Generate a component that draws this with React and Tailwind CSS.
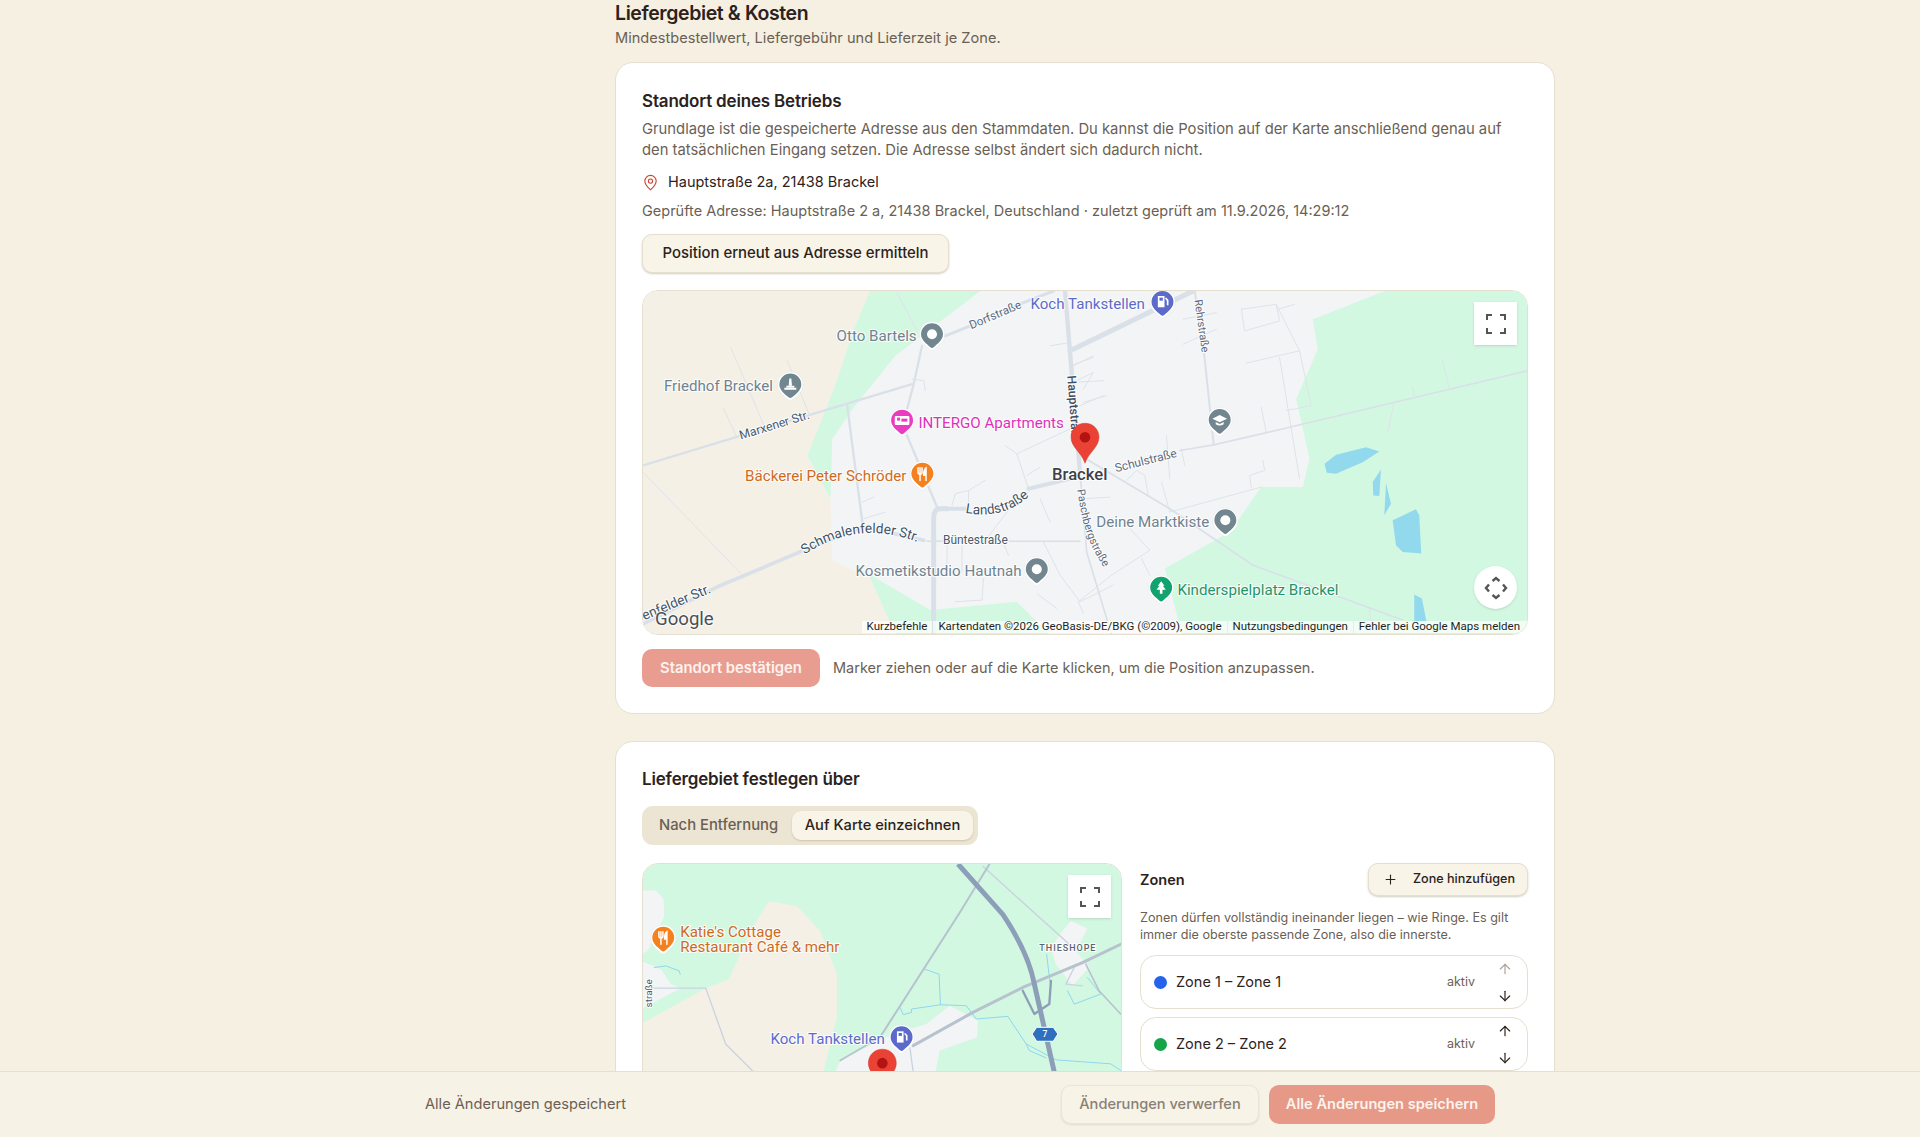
import { ArrowDown, ArrowUp, MapPin, Plus } from 'lucide-react'

const font = { fontFamily: 'Roboto, "Liberation Sans", sans-serif' }

// map drawings use the coordinates of a 3x crop, so one unit is a third of a pixel
function Road({ p, w = 3, c = '#dde3ea' }) {
  return <polyline points={p} fill="none" stroke={c} strokeWidth={w} strokeLinejoin="round" strokeLinecap="round" />
}

function Label({ x, y, size = 45.5, fill = '#6f8290', rotate, anchor, weight, spacing, children }) {
  return (
    <text
      x={x}
      y={y}
      fontSize={size}
      fill={fill}
      fontWeight={weight}
      textAnchor={anchor}
      letterSpacing={spacing}
      stroke="#fff"
      strokeWidth="6"
      strokeOpacity="0.85"
      paintOrder="stroke"
      transform={rotate ? `rotate(${rotate} ${x} ${y})` : undefined}
      style={font}
    >
      {children}
    </text>
  )
}

function Curved({ id, d, size = 36, fill = '#435468', children }) {
  return (
    <>
      <path id={id} d={d} fill="none" />
      <text fontSize={size} fill={fill} stroke="#fff" strokeWidth="6" strokeOpacity="0.85" paintOrder="stroke" style={font}>
        <textPath href={`#${id}`}>{children}</textPath>
      </text>
    </>
  )
}

function Poi({ x, y, color, children }) {
  return (
    <g transform={`translate(${x} ${y})`}>
      <path d="M-38 0A38 38 0 1 1 38 0C38 22 20 34 8 45C3 50-3 50-8 45C-20 34-38 22-38 0Z" fill="#fff" stroke="#d8dde2" strokeWidth="1" />
      <path d="M-33 0A33 33 0 1 1 33 0C33 18 16 29 5 39C2 42-2 42-5 39C-16 29-33 18-33 0Z" fill={color} />
      {children}
    </g>
  )
}

const Fork = () => (
  <g stroke="#fff" strokeWidth="4.5" fill="none" strokeLinecap="round">
    <path d="M-13-18V-4C-13 1-7 1-7 1C-7 1-1 1-1-4V-18M-7-18V20" />
    <path d="M11 20V-18C5-14 4-4 4 4H11" fill="#fff" />
  </g>
)
const Dot = () => <circle r="15" fill="#fff" />
const Pump = () => (
  <g fill="#fff">
    <path d="M-14-18H6V16H-14Z" />
    <path d="M10-14L18-6V10H13V-4L8-10Z" />
    <rect x="-9" y="-13" width="10" height="9" fill="#5c6bc9" />
  </g>
)
const Bed = () => (
  <g>
    <rect x="-22" y="-14" width="44" height="27" rx="3" fill="#fff" />
    <rect x="-15" y="-9" width="9" height="9" fill="#e93cc0" />
    <rect x="-2" y="-6" width="18" height="9" fill="#e93cc0" />
  </g>
)
const Monument = () => (
  <g fill="#fff">
    <path d="M-3-18H3L5 4H-5Z" />
    <path d="M-12 4H12V9H-12ZM-18 10H18V16H-18Z" />
  </g>
)
const Cap = () => (
  <g fill="#fff">
    <path d="M0-15L22-4L0 7L-22-4Z" />
    <path d="M-12 6L0 12L12 6V13C5 18-5 18-12 13Z" />
  </g>
)
const Tree = () => <path d="M0-20L10-6H5L14 6H4V18H-4V6H-14L-5-6H-10Z" fill="#fff" />

function Marker({ x, y, scale = 1 }) {
  return (
    <g transform={`translate(${x} ${y}) scale(${scale})`}>
      <path d="M0-42C-24-42-42-24-42 0C-42 30-10 46 0 78C10 46 42 30 42 0C42-24 24-42 0-42Z" fill="#ea4335" stroke="#d33426" strokeWidth="1.5" />
      <circle r="16" fill="#b31412" />
    </g>
  )
}

function FullscreenButton({ className }) {
  return (
    <div className={`absolute flex h-[43px] w-[43px] items-center justify-center bg-white shadow-sm ${className}`}>
      <svg width="20" height="20" viewBox="0 0 20 20" fill="none" stroke="#555" strokeWidth="2">
        <path d="M1 6V1H6M14 1H19V6M19 14V19H14M6 19H1V14" />
      </svg>
    </div>
  )
}

function MainMap() {
  return (
    <div className="relative h-[345px] overflow-hidden rounded-2xl border border-[#e6dfcf]">
      <svg className="block h-full w-full" viewBox="6 15 2658 1032" preserveAspectRatio="none">
        <rect x="0" y="0" width="2700" height="1100" fill="#f3f4f5" />
        <path d="M0 0H700L640 130L580 310L500 510L570 640L575 825L690 880L770 1060H0Z" fill="#f5f0e6" />
        <path d="M695 0H1040L765 210L700 290L640 365L575 460L570 640L500 510L580 310L640 130Z" fill="#d3f8e2" />
        <path d="M640 840L870 975L1130 950L1190 1010L1240 1060H770L690 880Z" fill="#d3f8e2" />
        <g transform="translate(1290 0)">
          <path d="M985 0L730 100L745 190L680 340L720 520L700 605L575 605L480 740L285 850L340 1060H1400V0Z" fill="#d3f8e2" />
          <path d="M765 535L800 508L890 485L930 498L880 530L800 565L772 562Z" fill="#93d9ee" />
          <path d="M935 552L930 632L912 630L910 590Z" fill="#93d9ee" />
          <path d="M950 592L965 655L945 690Z" fill="#93d9ee" />
          <path d="M970 705L1040 672L1050 690L1056 805L1000 800L980 780Z" fill="#93d9ee" />
          <path d="M1035 928L1058 940L1072 1010H1035Z" fill="#93d9ee" />
        </g>

        {/* small roads */}
        <Road p="270,185 370,420" />
        <Road p="440,225 505,385" />
        <Road p="248,368 288,455" />
        <Road p="6,560 300,865" />
        <Road p="770,20 830,135" />
        <Road p="815,280 850,285 855,315" />
        <Road p="665,650 700,635" />
        <Road p="670,700 735,680" />
        <Road p="1130,505 1290,430" />
        <Road p="1095,480 1130,505 1165,610" />
        <Road p="1160,570 1200,545" />
        <Road p="935,660 945,625 985,615 1035,585" />
        <Road p="985,615 985,670" />
        <Road p="1040,760 1100,680 1165,620" />
        <Road p="1210,770 1260,870 1320,950 1420,900" />
        <Road p="920,770 920,860" />
        <Road p="965,770 965,860" />
        <Road p="1090,775 1105,810" />
        <Road p="945,950 1025,945 1030,880" />
        <Road p="1190,925 1250,970" />
        <Road p="1230,180 1290,170" />
        <Road p="1300,240 1360,210" />
        <Road p="1300,290 1360,260" />
        <Road p="1330,350 1400,330" />
        <Road p="1200,640 1230,710" />
        <g transform="translate(1290 0)">
          <Road p="515,70 620,55 630,105 525,135 515,70" />
          <Road p="620,55 690,195 725,360 650,375" />
          <Road p="625,70 675,55" />
          <Road p="530,232 690,195" />
          <Road p="630,215 690,580" />
          <Road p="575,365 590,440" />
          <Road p="1120,225 1140,305" />
          <Road p="1030,305 1035,330" />
          <Road p="975,350 955,440" />
          <Road p="340,100 440,80" />
          <Road p="340,175 440,130" />
          <Road p="290,450 300,580" />
          <Road p="335,490 345,540" />
          <Road p="275,590 300,680" />
          <Road p="300,680 575,605" />
          <Road p="545,605 540,570 585,555 580,525" />
          <Road p="170,585 200,555 225,570 235,630" />
          <Road p="120,635 40,640" />
          <Road p="125,870 240,795 180,730" />
          <Road p="215,820 240,870" />
          <Road p="125,870 25,950 40,985" />
          <Road p="0,240 70,215" />
          <Road p="0,290 100,285" />
          <Road p="40,310 70,260" />
          <Road p="30,360 100,330" />
          <Road p="900,970 905,1010" />
        </g>

        {/* larger roads */}
        <Road p="6,540 300,450 815,295" w={7} c="#d9e0e8" />
        <Road p="-10,1025 230,905 490,795 670,725 850,765" w={11} c="#d9e0e8" />
        <Road p="620,360 668,730" w={7} c="#d9e0e8" />
        <Road p="845,180 820,295 800,370" w={7} c="#d9e0e8" />
        <Road p="800,450 890,665" w={7} c="#d9e0e8" />
        <Road p="890,670 975,670" w={12} c="#d9e0e8" />
        <path d="M925 670H900C885 670 880 680 880 700V1050" fill="none" stroke="#d9e0e8" strokeWidth="15" />
        <Road p="1165,610 1310,575" w={12} c="#d9e0e8" />
        <Road p="860,768 1320,768" w={5} c="#d9e0e8" />
        <Road p="1275,15 1290,200 1320,560" w={13} c="#d9e0e8" />
        <Road p="1320,560 1340,800 1415,1050" w={5} c="#d9e0e8" />
        <Road p="915,150 990,120 1150,50 1240,15" w={9} c="#d9e0e8" />
        <Road p="1290,195 1660,15" w={15} c="#d9e0e8" />
        <g transform="translate(1290 0)">
          <Road p="375,15 405,220 432,478" w={6} c="#d9e0e8" />
          <Road p="330,495 432,478 660,425 1375,255" w={5} c="#d9e0e8" />
          <Road p="40,515 300,670 550,840 1000,1005" w={5} c="#d9e0e8" />
        </g>

        {/* road names */}
        <Label x={300} y={462} size={37} fill="#4a5a70" rotate={-17}>Marxener Str.</Label>
        <Label x={993} y={130} size={35} fill="#5c6b7e" rotate={-23}>Dorfstraße</Label>
        <Curved id="land" d="M975 682Q1090 705 1172 628" size={41}>Landstraße</Curved>
        <Curved id="schmal" d="M492 808Q660 695 850 778" size={41}>Schmalenfelder Str.</Curved>
        <Curved id="enf" d="M10 1006L235 912" size={41}>enfelder Str.</Curved>
        <Label x={908} y={775} size={36} fill="#4a5a70">Büntestraße</Label>
        <Label x={1282} y={270} size={37} fill="#3f4e62" weight="500" rotate={86}>Hauptstraße</Label>
        <Label x={1664} y={42} size={33} fill="#5c6b7e" rotate={82}>Rehrstraße</Label>
        <Curved id="pasch" d="M1312 612C1325 720 1350 790 1408 870" size={33} fill="#5c6b7e">Paschbergstraße</Curved>
        <Label x={1428} y={560} size={36} fill="#5c6b7e" rotate={-14}>Schulstraße</Label>

        {/* places */}
        <Poi x={875} y={145} color="#72868f"><Dot /></Poi>
        <Label x={588} y={166}>Otto Bartels</Label>
        <Poi x={449} y={296} color="#72868f"><Monument /></Poi>
        <Label x={69} y={316}>Friedhof Brackel</Label>
        <Poi x={785} y={405} color="#e93cc0"><Bed /></Poi>
        <Label x={834} y={427} fill="#e030bb">INTERGO Apartments</Label>
        <Poi x={846} y={565} color="#f4811f"><Fork /></Poi>
        <Label x={313} y={588} fill="#cf6a1c">Bäckerei Peter Schröder</Label>
        <Poi x={1190} y={852} color="#72868f"><Dot /></Poi>
        <Label x={645} y={872}>Kosmetikstudio Hautnah</Label>
        <Poi x={1568} y={48} color="#5c6bc9"><Pump /></Poi>
        <Label x={1171} y={70} fill="#5c6bc9">Koch Tankstellen</Label>
        <Poi x={1740} y={403} color="#72868f"><Cap /></Poi>
        <Poi x={1757} y={705} color="#72868f"><Dot /></Poi>
        <Label x={1369} y={726}>Deine Marktkiste</Label>
        <Poi x={1564} y={908} color="#12a26f"><Tree /></Poi>
        <Label x={1613} y={929} fill="#1f9468">Kinderspielplatz Brackel</Label>

        <Label x={1236} y={585} size={50} fill="#3b4149" weight="500">Brackel</Label>
        <Marker x={1335} y={455} />
        <Label x={42} y={1020} size={56} fill="#4a4f55">Google</Label>
      </svg>

      <FullscreenButton className="right-[10px] top-[11px]" />
      <div className="absolute right-[10px] top-[275px] flex h-[43px] w-[43px] items-center justify-center rounded-full bg-white shadow-sm">
        <svg width="24" height="24" viewBox="0 0 24 24" fill="none" stroke="#555" strokeWidth="2.4">
          <path d="M8.5 5L12 2L15.5 5M19 8.5L22 12L19 15.5M15.5 19L12 22L8.5 19M5 15.5L2 12L5 8.5" />
        </svg>
      </div>
      <div className="absolute bottom-0 right-0 flex h-[14px] items-center text-[11.5px] leading-none text-[#1f1f1f]" style={font}>
        <span className="bg-white/70 pl-[5px] pr-[5px]">Kurzbefehle</span>
        <span className="ml-[1px] bg-white/70 px-[5px]">Kartendaten ©2026 GeoBasis-DE/BKG (©2009), Google</span>
        <span className="ml-[1px] bg-white/70 px-[5px]">Nutzungsbedingungen</span>
        <span className="ml-[1px] bg-white/70 pl-[5px] pr-[7px]">Fehler bei Google Maps melden</span>
      </div>
    </div>
  )
}

function ZoneMap() {
  return (
    <div className="relative h-[480px] overflow-hidden rounded-2xl border border-[#e6dfcf]">
      <svg className="block h-full w-full" viewBox="6 38 1440 1440" preserveAspectRatio="none">
        <rect x="0" y="0" width="1500" height="1500" fill="#d3f8e2" />
        <path d="M0 520L200 410L265 385L330 240L385 150L470 165L540 240L590 370L590 500L540 700H0Z" fill="#f5f0e6" />
        <path d="M0 118L45 118L68 145L70 195L40 260L20 300L0 310Z" fill="#f3f4f5" />
        <path d="M0 330L60 355L90 400L120 412L0 475Z" fill="#f3f4f5" />
        <path d="M570 700L600 630L750 555L860 520L930 465L1015 510L1012 560L900 600L880 700Z" fill="#f3f4f5" />
        <path d="M1295 210L1345 232L1310 300L1350 350L1300 405L1250 340L1235 290L1270 240Z" fill="#f3f4f5" />

        <Road p="40,350 75,345 115,360 118,370" c="#8fd6ec" />
        <Road p="855,355 898,370 902,462 980,465 1010,505 1105,497 1160,580 1250,628 1415,640 1445,660" c="#8fd6ec" />
        <Road p="902,462 815,475 815,485 790,492 780,470" c="#8fd6ec" />
        <Road p="1160,580 1170,600 1220,622" c="#8fd6ec" />
        <Road p="1222,310 1232,395" c="#8fd6ec" />
        <Road p="1285,420 1305,460 1385,430 1345,380" c="#8fd6ec" />

        <Road p="20,412 195,412 255,580 340,665" c="#c9d3e0" w={4} />
        <Road p="1030,45 1290,280" c="#c9d3de" w={4} />
        <Road p="1050,38 960,185 720,560" c="#b7c2ce" w={6} />
        <Road p="1340,340 1380,420 1445,490" c="#b7c2ce" w={5} />
        <Road p="1310,340 1280,400 1330,405" c="#c9d3de" w={4} />
        <Road p="600,630 720,560" c="#b7c2ce" w={5} />
        <Road p="810,590 820,665" c="#c9d3de" w={4} />
        <Road p="820,585 1000,485 1150,410 1330,335 1445,280" c="#b7c2ce" w={9} />
        <Road p="1150,420 1185,490 1230,460 1235,390" c="#8d9fb8" w={7} />
        <path d="M955 38L1090 190C1130 250 1170 320 1185 400L1245 665" fill="none" stroke="#8d9fb8" strokeWidth="15" />

        <Poi x={67} y={260} color="#f4811f"><Fork /></Poi>
        <Label x={118} y={258} fill="#cf6a1c">Katie's Cottage</Label>
        <Label x={118} y={304} fill="#cf6a1c">Restaurant Café & mehr</Label>
        <Label x={32} y={470} size={30} fill="#4a5a70" rotate={-90}>straße</Label>
        <Label x={1200} y={300} size={27} fill="#5a6570" weight="500" spacing={3}>THIESHOPE</Label>
        <path d="M1192 530H1242L1256 550L1242 572H1192L1178 550Z" fill="#2f6fbd" stroke="#fff" strokeWidth="3" />
        <text x={1217} y={560} fontSize="26" fontWeight="500" fill="#fff" textAnchor="middle" style={font}>7</text>
        <Poi x={785} y={560} color="#5c6bc9"><Pump /></Poi>
        <Label x={390} y={581} fill="#5c6bc9">Koch Tankstellen</Label>
        <Marker x={727} y={638} />
      </svg>
      <FullscreenButton className="right-[10px] top-[11px]" />
    </div>
  )
}

function ZoneRow({ dot, label, upDisabled }) {
  return (
    <div className="flex h-[54px] items-center rounded-2xl border border-[#e6dfcf] bg-white pl-[13px] pr-[14px]">
      <span className={`h-[13px] w-[13px] rounded-full ${dot}`} />
      <span className="ml-[9px] flex-1 text-[14.5px] text-[#2c221d]">{label}</span>
      <span className="mr-[22px] text-[12.5px] text-[#6b5f55]">aktiv</span>
      <div className="flex flex-col gap-[11px]">
        <ArrowUp size={16} strokeWidth={1.75} className={upDisabled ? 'text-[#a9a29a]' : 'text-[#2c221d]'} />
        <ArrowDown size={16} strokeWidth={1.75} className="text-[#2c221d]" />
      </div>
    </div>
  )
}

export default function App() {
  return (
    <div className="flex h-[1137px] flex-col overflow-hidden bg-[#f5f0e1] text-[#2c221d]" style={{ fontFamily: 'Inter, "Noto Sans", sans-serif' }}>
      <div className="min-h-0 flex-1 overflow-hidden">
        <div className="ml-[615px] w-[940px]">
          <h1 className="mt-[1px] text-[19.5px] font-semibold leading-[24px] tracking-[-0.02em]">Liefergebiet &amp; Kosten</h1>
          <p className="mt-[1px] text-[14.6px] leading-[24px] text-[#6b5f55]">Mindestbestellwert, Liefergebühr und Lieferzeit je Zone.</p>

          <section className="mt-[12px] rounded-[18px] border border-[#e6dfcf] bg-white p-[26px]">
            <h2 className="text-[17px] font-semibold leading-[24px] tracking-[-0.01em]">Standort deines Betriebs</h2>
            <p className="mt-[6px] text-[14.8px] leading-[20.5px] text-[#6b5f55]">
              Grundlage ist die gespeicherte Adresse aus den Stammdaten. Du kannst die Position auf der Karte anschließend genau auf<br />den tatsächlichen Eingang setzen. Die Adresse selbst ändert sich dadurch nicht.
            </p>
            <div className="mt-[10px] flex h-[24px] items-center gap-[9px] text-[14.5px]">
              <MapPin size={17} strokeWidth={1.6} className="text-[#c8472f]" />
              Hauptstraße 2a, 21438 Brackel
            </div>
            <p className="mt-[6px] text-[14.5px] leading-[22px] text-[#6b5f55]">Geprüfte Adresse: Hauptstraße 2 a, 21438 Brackel, Deutschland · zuletzt geprüft am 11.9.2026, 14:29:12</p>
            <button className="mt-[12px] flex h-[39px] w-[307px] items-center justify-center rounded-[10px] border border-[#e6dfcf] bg-[#f8f4e7] text-[14.9px] font-medium shadow-[0_1px_2px_rgba(80,60,30,0.25)]">
              Position erneut aus Adresse ermitteln
            </button>
            <div className="mt-[17px]">
              <MainMap />
            </div>
            <div className="mt-[14px] flex items-center gap-[13px]">
              <button className="flex h-[38px] w-[178px] items-center justify-center rounded-[10px] bg-[#e99c90] text-[14.8px] font-semibold text-[#fdf3ee]">
                Standort bestätigen
              </button>
              <span className="text-[14.5px] text-[#6b5f55]">Marker ziehen oder auf die Karte klicken, um die Position anzupassen.</span>
            </div>
          </section>

          <section className="mt-[27px] rounded-[18px] border border-[#e6dfcf] bg-white px-[26px] pb-[26px] pt-[25px]">
            <h2 className="text-[17px] font-semibold leading-[24px] tracking-[-0.01em]">Liefergebiet festlegen über</h2>
            <div className="mt-[15px] flex h-[39px] w-[336px] items-center rounded-[11px] bg-[#ece5d3] pl-[17px] pr-[5px]">
              <span className="text-[14.8px] font-medium text-[#6b5f55]">Nach Entfernung</span>
              <span className="ml-auto flex h-[29px] w-[181px] items-center justify-center rounded-[9px] bg-[#f8f4e7] text-[14.7px] font-medium shadow-[0_1px_2px_rgba(80,60,30,0.2)]">Auf Karte einzeichnen</span>
            </div>
            <div className="mt-[18px] grid grid-cols-[480px_1fr] gap-[18px]">
              <ZoneMap />
              <div>
                <div className="flex h-[33px] items-center justify-between">
                  <h3 className="text-[14.5px] font-semibold">Zonen</h3>
                  <button className="flex h-[33px] w-[160px] items-center gap-[15px] rounded-[10px] border border-[#e6dfcf] bg-[#f8f4e7] pl-[14px] text-[12.6px] font-medium shadow-[0_1px_2px_rgba(80,60,30,0.25)]">
                    <Plus size={15} strokeWidth={1.75} />
                    Zone hinzufügen
                  </button>
                </div>
                <p className="mt-[13px] text-[12.6px] leading-[17px] text-[#6b5f55]">
                  Zonen dürfen vollständig ineinander liegen – wie Ringe. Es gilt immer die oberste passende Zone, also die innerste.
                </p>
                <div className="mt-[12px] flex flex-col gap-[8px]">
                  <ZoneRow dot="bg-[#2563eb]" label="Zone 1 – Zone 1" upDisabled />
                  <ZoneRow dot="bg-[#16a34a]" label="Zone 2 – Zone 2" />
                </div>
              </div>
            </div>
          </section>
        </div>
      </div>

      <footer className="h-[66px] shrink-0 border-t border-[#e6dfcf] bg-[#f6f2e6]">
        <div className="mx-auto flex h-full w-[1070px] items-center justify-between">
          <span className="text-[14.6px] text-[#6b5f55]">Alle Änderungen gespeichert</span>
          <div className="flex gap-[10px]">
            <button className="flex h-[39px] w-[198px] items-center justify-center rounded-[10px] border border-[#ece5d3] bg-[#f7f3e6] text-[14.6px] font-medium text-[#8a8076] shadow-[0_1px_2px_rgba(80,60,30,0.12)]">
              Änderungen verwerfen
            </button>
            <button className="flex h-[39px] w-[226px] items-center justify-center rounded-[10px] bg-[#e59986] text-[14.6px] font-semibold text-[#fdf3ee]">
              Alle Änderungen speichern
            </button>
          </div>
        </div>
      </footer>
    </div>
  )
}
